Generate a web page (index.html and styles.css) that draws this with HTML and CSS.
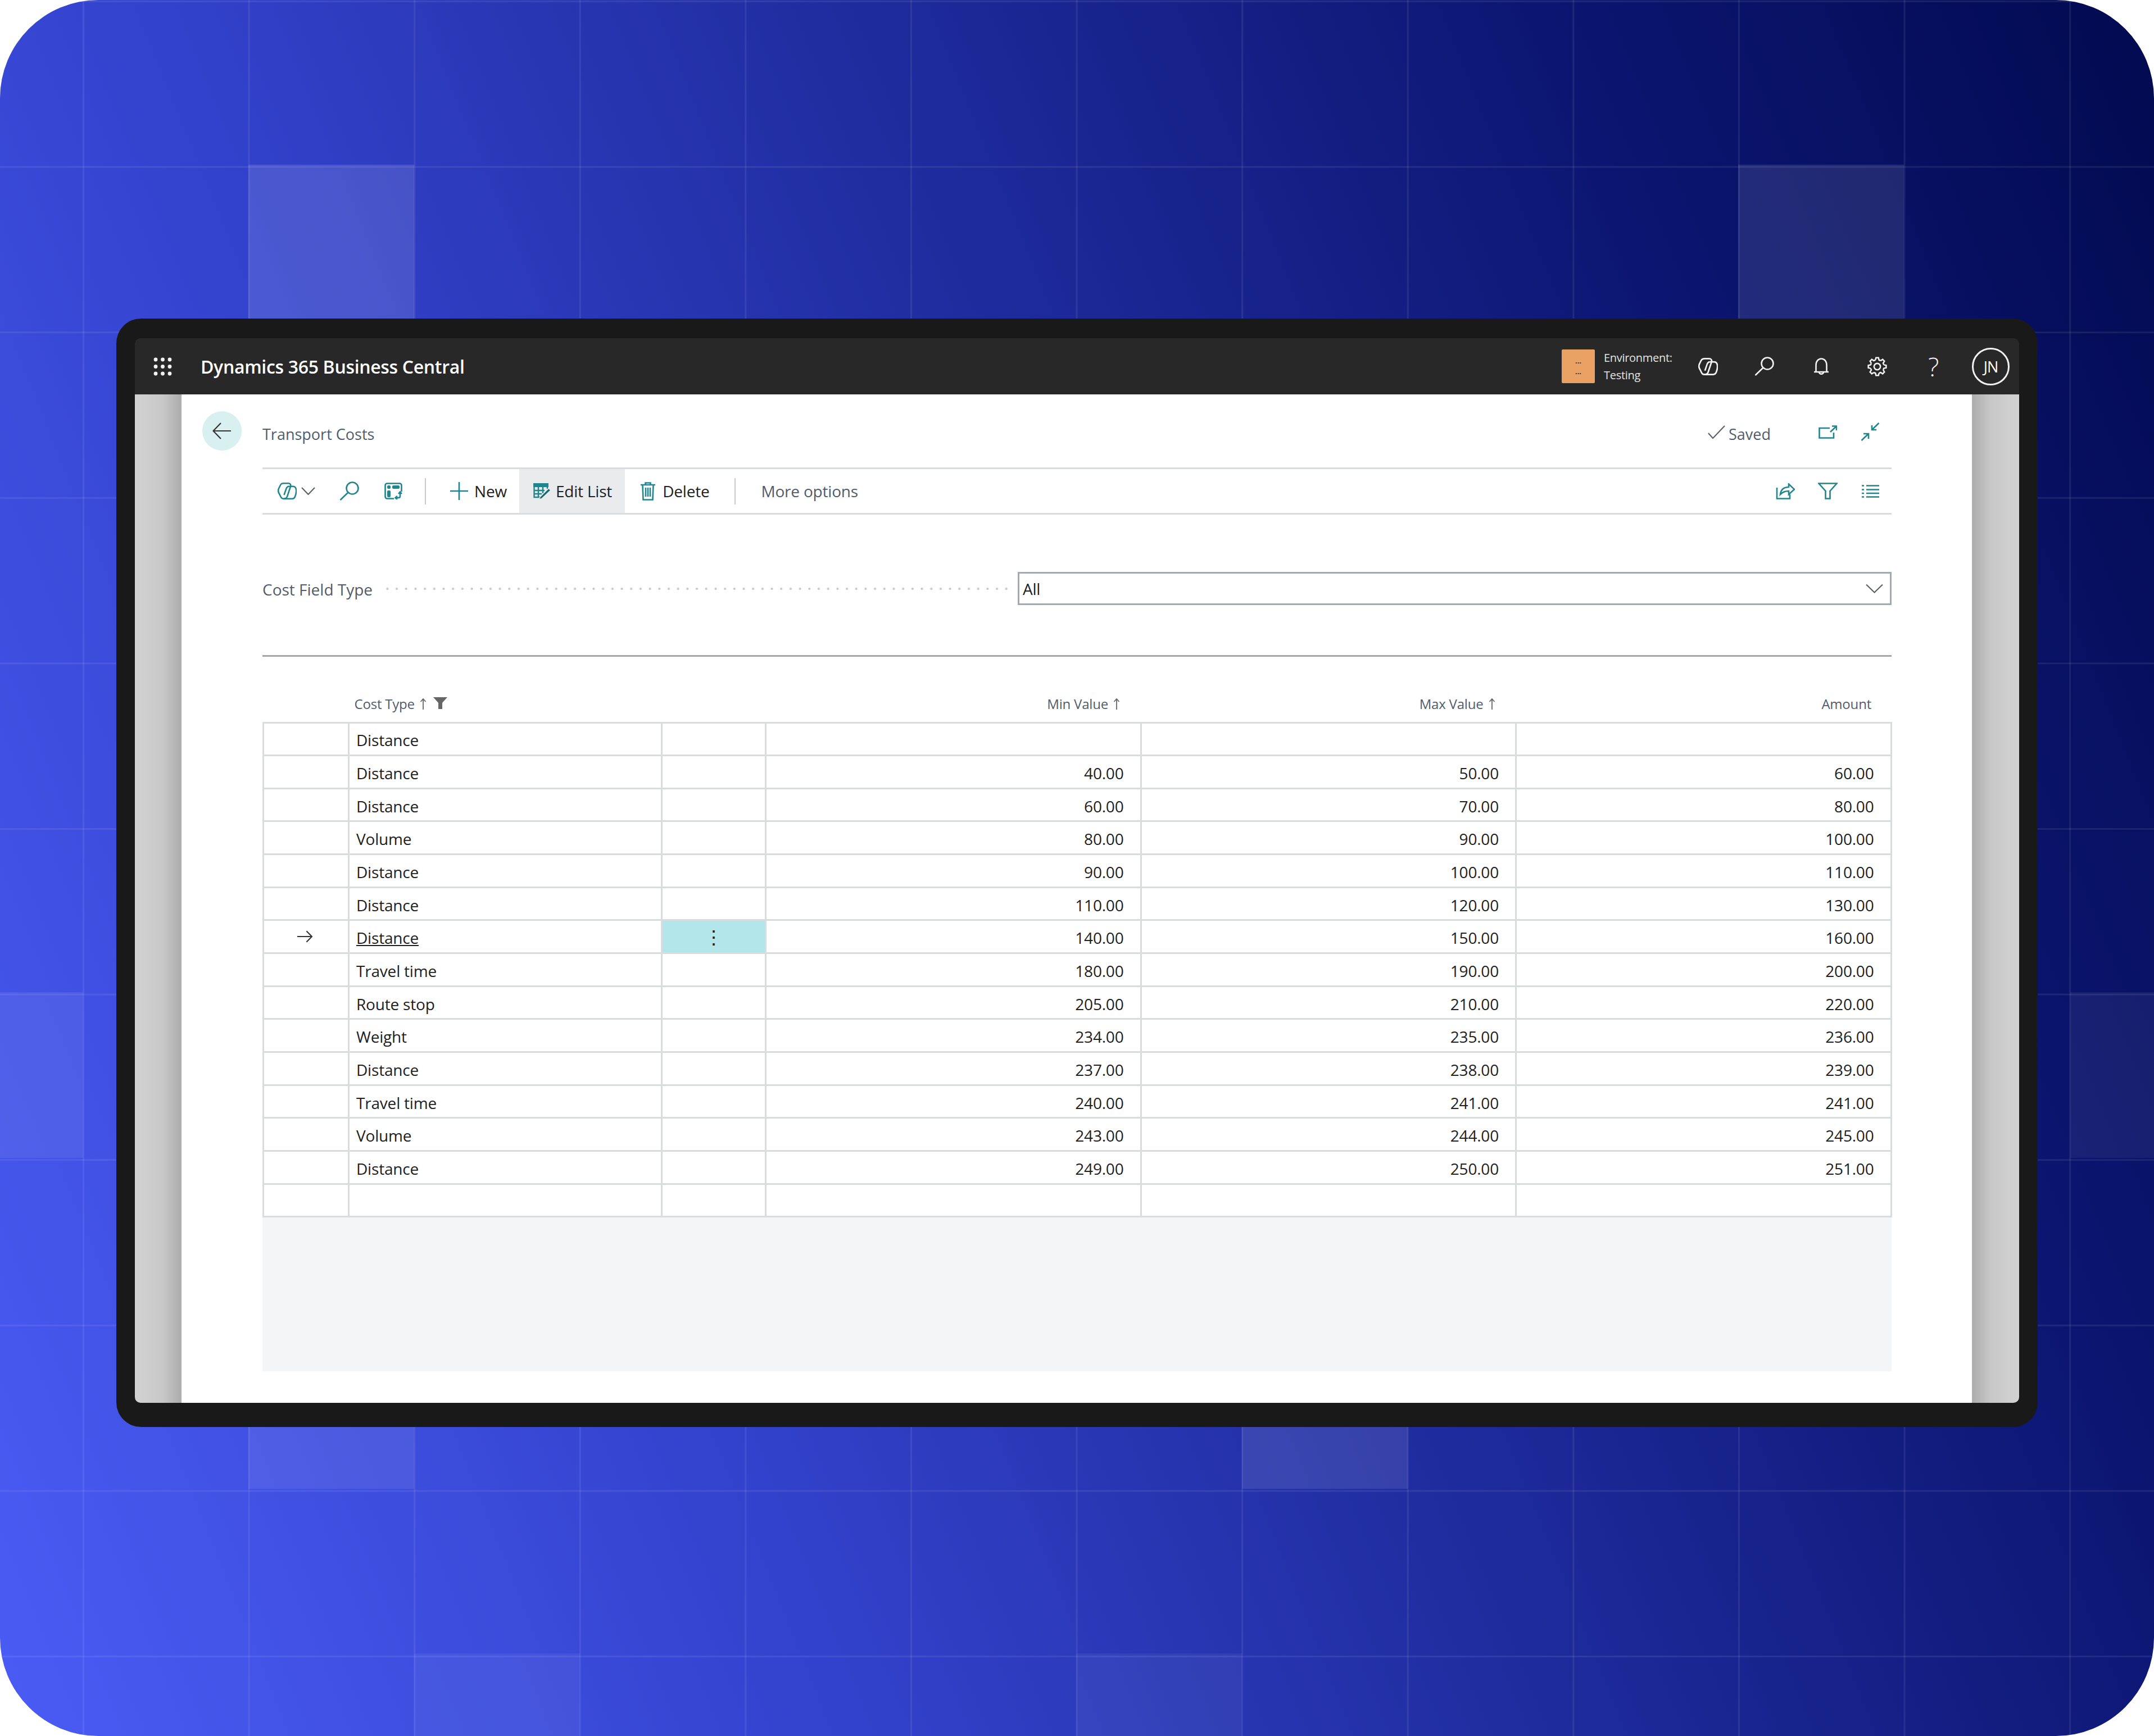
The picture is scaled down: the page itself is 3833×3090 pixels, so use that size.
FILE: index.html
```html
<!DOCTYPE html>
<html lang="en">
<head>
	<meta charset="utf-8">
	<title>Transport Costs</title>
	<link rel="stylesheet" href="styles.css">
</head>
<body>

<svg class="defs" width="0" height="0">
	<symbol id="i-copilot" viewBox="0 0 34 30">
		<path d="M19 1.300H11C8 1.300 6 2.300 5 4.500L2 10.500C0.500 14 1 17 3 20L6 26C7 28 9 28.700 11 28.700C14 28.700 16 27.500 17 25L23 7C24 3.500 22 1.300 19 1.300Z"/>
		<path d="M20 6.800C18 6.800 16.500 8 15.500 10.500L11.500 22"/>
		<path d="M20 6.800H27C30 6.800 32 8.500 32.700 11C33.700 15 33 20 31 25C30 27.500 28 28.700 26 28.700H11"/>
	</symbol>
	<symbol id="i-search" viewBox="0 0 35 34">
		<circle cx="23" cy="12" r="10.500"/>
		<path d="M15.500 19.500 1.500 33"/>
	</symbol>
	<symbol id="i-arrow-up" viewBox="0 0 12 20">
		<path d="M6 20V1M1.500 6 6 1l4.500 5"/>
	</symbol>
</svg>

<div class="page">
	<i class="tile t1"></i><i class="tile t2"></i><i class="tile t3"></i><i class="tile t4"></i>
	<i class="tile t5"></i><i class="tile t6"></i><i class="tile t7"></i><i class="tile t8"></i>

	<div class="frame">
		<header class="topbar">
			<svg class="apps" width="33" height="33" viewBox="0 0 33 33"><g>
				<circle cx="4" cy="4" r="3.400"/><circle cx="16.500" cy="4" r="3.400"/><circle cx="29" cy="4" r="3.400"/>
				<circle cx="4" cy="16.500" r="3.400"/><circle cx="16.500" cy="16.500" r="3.400"/><circle cx="29" cy="16.500" r="3.400"/>
				<circle cx="4" cy="29" r="3.400"/><circle cx="16.500" cy="29" r="3.400"/><circle cx="29" cy="29" r="3.400"/>
			</g></svg>
			<div class="brand">Dynamics 365 Business Central</div>
			<div class="env-box"><span>...</span><span>...</span></div>
			<div class="env-text"><div>Environment:</div><div>Testing</div></div>
			<svg class="ico ico-top t-copilot" width="35" height="31"><use href="#i-copilot"/></svg>
			<svg class="ico ico-top t-search" width="35" height="34"><use href="#i-search"/></svg>
			<svg class="ico ico-top t-bell" width="28" height="31" viewBox="0 0 28 31">
				<path d="M1 25h26M4.500 25V13C4.500 6 8.500 1.500 14 1.500S23.500 6 23.500 13v12M10 25c0 5 8 5 8 0"/>
			</svg>
			<svg class="ico ico-top t-gear" width="35" height="35" viewBox="-18 -18 36 36">
				<circle r="5.800"/>
				<path d="M-3.200-12.100-2.300-16.300H2.300L3.200-12.100 6.250-10.800"/>
				<path transform="rotate(45)" d="M-3.200-12.100-2.300-16.300H2.300L3.200-12.100 6.250-10.800"/>
				<path transform="rotate(90)" d="M-3.200-12.100-2.300-16.300H2.300L3.200-12.100 6.250-10.800"/>
				<path transform="rotate(135)" d="M-3.200-12.100-2.300-16.300H2.300L3.200-12.100 6.250-10.800"/>
				<path transform="rotate(180)" d="M-3.200-12.100-2.300-16.300H2.300L3.200-12.100 6.250-10.800"/>
				<path transform="rotate(225)" d="M-3.200-12.100-2.300-16.300H2.300L3.200-12.100 6.250-10.800"/>
				<path transform="rotate(270)" d="M-3.200-12.100-2.300-16.300H2.300L3.200-12.100 6.250-10.800"/>
				<path transform="rotate(315)" d="M-3.200-12.100-2.300-16.300H2.300L3.200-12.100 6.250-10.800"/>
			</svg>
			<div class="help">?</div>
			<div class="avatar">JN</div>
		</header>

		<div class="workspace">
			<div class="side side-left"></div>
			<main class="panel">
				<div class="page-head">
					<div class="back">
						<svg class="ico ico-dark" width="34" height="32" viewBox="0 0 34 32"><path d="M33 16H2M15 2 1.500 16 15 30"/></svg>
					</div>
					<div class="page-title">Transport Costs</div>
					<svg class="ico ico-gray saved-check" width="31" height="24" viewBox="0 0 31 24"><path d="M1 14l8 9L30 1"/></svg>
					<div class="saved">Saved</div>
					<svg class="ico open-in" width="33" height="24" viewBox="0 0 33 24"><path d="M20 5H1.500V22.500H27V13M21 12 32 1.500M24 1.500H32V9"/></svg>
					<svg class="ico collapse" width="34" height="33" viewBox="0 0 34 33"><path d="M32.500 1 20 13M20 5V13H28M1.500 32 14 20M5 20H14V29"/></svg>
				</div>

				<div class="body">
					<div class="toolbar">
						<svg class="ico b-copilot" width="34" height="30"><use href="#i-copilot"/></svg>
						<svg class="ico ico-gray b-chev" width="25" height="14" viewBox="0 0 25 14"><path d="M1 1l11.500 12L24 1"/></svg>
						<svg class="ico b-search" width="35" height="34"><use href="#i-search"/></svg>
						<svg class="ico b-layout" width="32" height="30" viewBox="0 0 32 30">
							<path d="M17 28.500H5c-2 0-3.500-1.500-3.500-3.500V5C1.500 3 3 1.500 5 1.500h22c2 0 3.500 1.500 3.500 3.500v11"/>
							<rect class="solid" x="5" y="5" width="6" height="6" rx="2"/>
							<rect class="solid" x="14" y="5" width="13" height="6" rx="2"/>
							<rect class="solid" x="5" y="14" width="6" height="12" rx="2"/>
							<path d="M28 17v7c0 2-1 3-3 3h-5M25 20l3-3.500 3 3.500M23 24l-3.500 3 3.500 3"/>
						</svg>
						<span class="tb-sep sep-a"></span>
						<svg class="ico b-plus" width="32" height="32" viewBox="0 0 32 32"><path d="M16 0V32M0 16H32"/></svg>
						<span class="tb-label lbl-new">New</span>
						<div class="tb-btn">
							<svg class="ico" width="32" height="29" viewBox="0 0 32 29">
								<rect class="solid" x="0" y="0" width="27" height="7"/>
								<path class="grid-lines" d="M1.500 7V25H13M1.500 13H20M1.500 19H15M9 7V25M17 7V18M25 7V10"/>
								<path class="pencil" d="M27 9.500 12 24.500l-2 4.500 5-1.500L31 12.500z"/>
							</svg>
							<span class="tb-label">Edit List</span>
						</div>
						<svg class="ico b-trash" width="26" height="34" viewBox="0 0 26 34">
							<path d="M0 6H26M8.500 6V2.500H17.500V6M3.500 6 4.500 32.500H21.500L22.500 6M9 11V27M13 11V27M17 11V27"/>
						</svg>
						<span class="tb-label lbl-delete">Delete</span>
						<span class="tb-sep sep-b"></span>
						<span class="tb-label tb-muted">More options</span>

						<div class="tb-right">
							<svg class="ico" width="34" height="29" viewBox="0 0 34 29"><path d="M2 8V27.500H25V20M8 20C9 12 14 7 23 7V1.500L33 11 23 20V14C17 14 12 16 8 20Z"/></svg>
							<svg class="ico b-funnel" width="35" height="30" viewBox="0 0 35 30"><path d="M1.500 1.500H33.500L21.500 15V28.500H13.500V15Z"/></svg>
							<svg class="ico b-lines" width="31" height="23" viewBox="0 0 31 23"><path d="M0 1.500H4M8 1.500H31M0 8.500H4M8 8.500H31M0 15H4M8 15H31M0 21.500H4M8 21.500H31"/></svg>
						</div>
					</div>

					<div class="field-row">
						<span class="field-label">Cost Field Type</span>
						<span class="field-dots"></span>
						<div class="field-input">
							<span>All</span>
							<svg class="ico ico-gray" width="31" height="17" viewBox="0 0 31 17"><path d="M1 1.500l14.500 14L30 1.500"/></svg>
						</div>
					</div>
					<div class="divider"></div>

					<table class="grid">
						<colgroup>
							<col class="c-mark"><col class="c-type"><col class="c-menu"><col class="c-num"><col class="c-num"><col class="c-num">
						</colgroup>
						<thead>
							<tr>
								<th></th>
								<th class="left">Cost Type<svg class="sort" width="12" height="20"><use href="#i-arrow-up"/></svg><svg class="head-funnel" width="25" height="21" viewBox="0 0 25 21"><path d="M0 0H25L16 10V21H9V10Z"/></svg></th>
								<th></th>
								<th>Min Value<svg class="sort" width="12" height="20"><use href="#i-arrow-up"/></svg></th>
								<th>Max Value<svg class="sort" width="12" height="20"><use href="#i-arrow-up"/></svg></th>
								<th class="plain">Amount</th>
							</tr>
						</thead>
						<tbody>
							<tr><td></td><td class="left">Distance</td><td></td><td></td><td></td><td></td></tr>
							<tr><td></td><td class="left">Distance</td><td></td><td>40.00</td><td>50.00</td><td>60.00</td></tr>
							<tr><td></td><td class="left">Distance</td><td></td><td>60.00</td><td>70.00</td><td>80.00</td></tr>
							<tr><td></td><td class="left">Volume</td><td></td><td>80.00</td><td>90.00</td><td>100.00</td></tr>
							<tr><td></td><td class="left">Distance</td><td></td><td>90.00</td><td>100.00</td><td>110.00</td></tr>
							<tr><td></td><td class="left">Distance</td><td></td><td>110.00</td><td>120.00</td><td>130.00</td></tr>
							<tr>
								<td class="mark"><svg class="ico ico-dark" width="27" height="22" viewBox="0 0 28 22"><path d="M0 11H27M17 1l10 10-10 10"/></svg></td>
								<td class="left"><u>Distance</u></td>
								<td class="menu-cell">⋮</td>
								<td>140.00</td><td>150.00</td><td>160.00</td>
							</tr>
							<tr><td></td><td class="left">Travel time</td><td></td><td>180.00</td><td>190.00</td><td>200.00</td></tr>
							<tr><td></td><td class="left">Route stop</td><td></td><td>205.00</td><td>210.00</td><td>220.00</td></tr>
							<tr><td></td><td class="left">Weight</td><td></td><td>234.00</td><td>235.00</td><td>236.00</td></tr>
							<tr><td></td><td class="left">Distance</td><td></td><td>237.00</td><td>238.00</td><td>239.00</td></tr>
							<tr><td></td><td class="left">Travel time</td><td></td><td>240.00</td><td>241.00</td><td>241.00</td></tr>
							<tr><td></td><td class="left">Volume</td><td></td><td>243.00</td><td>244.00</td><td>245.00</td></tr>
							<tr><td></td><td class="left">Distance</td><td></td><td>249.00</td><td>250.00</td><td>251.00</td></tr>
							<tr><td></td><td class="left"></td><td></td><td></td><td></td><td></td></tr>
						</tbody>
					</table>
					<div class="grid-empty"></div>
				</div>
			</main>
			<div class="side side-right"></div>
		</div>
	</div>
</div>

</body>
</html>
```

FILE: styles.css
```css
body { margin: 0; background: #fff; font-family: "Open Sans", "Noto Sans", sans-serif; color: #212121; }

/* backdrop */
.page {
	position: relative; box-sizing: border-box; width: 3833px; height: 3090px; padding: 567px 207px 0;
	border-radius: 175px; overflow: hidden;
	background:
		linear-gradient(rgba(255,255,255,.08) 3px, transparent 3px) 0 1px / 100% 294.6px,
		linear-gradient(90deg, rgba(255,255,255,.08) 3px, transparent 3px) 147px 0 / 294.6px 100%,
		linear-gradient(68deg, #4a5cf5 0%, #3342cc 30%, #1e2b9c 55%, #0c1672 78%, #020a50 100%);
}
.tile { position: absolute; width: 295px; height: 295px; background: rgba(255,255,255,.12); }
.t1 { left: 442px; top: 293px; }
.t2 { left: 3093px; top: 293px; background: rgba(255,255,255,.1); }
.t3 { left: 0; top: 1766px; width: 148px; background: rgba(255,255,255,.07); }
.t4 { left: 3684px; top: 1766px; width: 149px; background: rgba(255,255,255,.06); }
.t5 { left: 442px; top: 2540px; height: 110px; background: rgba(255,255,255,.08); }
.t6 { left: 2210px; top: 2540px; height: 110px; background: rgba(255,255,255,.1); }
.t7 { left: 737px; top: 2943px; height: 147px; background: rgba(255,255,255,.05); }
.t8 { left: 1915px; top: 2943px; height: 147px; background: rgba(255,255,255,.05); }

.frame {
	position: relative; box-sizing: border-box; width: 3419px; height: 1973px; padding: 35px 33px 43px;
	background: #191919; border-radius: 44px; display: flex; flex-direction: column;
}

/* icons */
.defs { position: absolute; }
.ico { fill: none; stroke: #20858c; stroke-width: 2.6; flex: none; display: block; }
.ico .solid { fill: #20858c; stroke: none; }
.ico .grid-lines { stroke-width: 2.4; }
.ico .pencil { fill: #17696f; stroke: #e9ebed; stroke-width: 1.4; }
.ico-top { stroke: #f2f2f2; }
.ico-gray { stroke: #5f6368; stroke-width: 2.2; }
.ico-dark { stroke: #333; stroke-width: 2.2; }

/* top bar */
.topbar {
	height: 100px; flex: none; display: flex; align-items: center; padding: 0 17px 0 33px;
	background: #282828; border-radius: 10px 10px 0 0; color: #fff;
}
.apps { fill: #f2f2f2; flex: none; }
.brand { margin-left: 51px; font-size: 32px; font-weight: 600; letter-spacing: -.33px; }
.env-box {
	margin-left: auto; width: 59px; height: 60px; border-radius: 2px; background: #e9a263; color: #333;
	display: flex; flex-direction: column; align-items: center; justify-content: center; gap: 4px;
	font-size: 13px; line-height: 15px; font-weight: 700;
}
.env-text { margin-left: 16px; width: 133px; font-size: 20px; line-height: 31px; color: #e4e4e4; letter-spacing: -.3px; }
.t-copilot { margin-left: 35px; }
.t-search { margin-left: 65px; }
.t-bell { margin-left: 70px; }
.t-gear { margin-left: 68px; }
.help { margin-left: 73px; width: 19px; font-size: 46px; font-weight: 300; color: #f2f2f2; line-height: 1; text-align: center; }
.avatar {
	margin-left: 59px; box-sizing: border-box; width: 67px; height: 67px; border: 3px solid #f2f2f2; border-radius: 50%;
	display: flex; align-items: center; justify-content: center; font-size: 27px; letter-spacing: -1px;
}

/* page area */
.workspace { flex: 1; display: flex; min-height: 0; border-radius: 0 0 10px 10px; overflow: hidden; }
.side { width: 83px; flex: none; }
.side-left { background: linear-gradient(90deg, #d2d2d2 0%, #c8c8c8 60%, #acacac 100%); }
.side-right { width: 84px; background: linear-gradient(90deg, #acacac 0%, #c8c8c8 40%, #d2d2d2 100%); }
.panel { flex: 1; background: #fff; padding: 30px 143px 0 37px; min-width: 0; }

.page-head { height: 70px; display: flex; align-items: center; padding-right: 21px; }
.back { width: 70px; height: 70px; border-radius: 50%; background: #d9f0f0; display: flex; align-items: center; justify-content: center; }
.page-title { margin-left: 37px; padding-top: 10px; font-size: 27px; color: #505c6d; }
.saved-check { margin-left: auto; margin-top: 3px; }
.saved { margin-left: 6px; padding-top: 10px; font-size: 27px; color: #505c6d; }
.open-in { margin-left: 85px; margin-top: 3px; }
.collapse { margin-left: 42px; margin-top: 3px; }

.body { margin-left: 107px; }

/* action bar */
.toolbar {
	margin-top: 30px; height: 84px; box-sizing: border-box; padding: 0 22px 0 27px;
	border-top: 3px solid #d9dcdf; border-bottom: 3px solid #d9dcdf;
	display: flex; align-items: center;
}
.tb-label { font-size: 28px; letter-spacing: -.2px; white-space: nowrap; }
.tb-muted { color: #505c6d; margin-left: 45px; }
.tb-sep { width: 2px; height: 47px; background: #c8cacc; flex: none; }
.b-chev { margin-left: 8px; }
.b-search { margin-left: 43px; }
.b-layout { margin-left: 45px; }
.sep-a { margin-left: 40px; }
.b-plus { margin-left: 43px; }
.lbl-new { margin-left: 11px; }
.tb-btn { align-self: stretch; margin-left: 22px; padding: 0 23px 0 25px; background: #e9ebed; display: flex; align-items: center; gap: 8px; }
.b-trash { margin-left: 28px; }
.lbl-delete { margin-left: 13px; }
.sep-b { margin-left: 45px; }
.tb-right { margin-left: auto; display: flex; align-items: center; }
.b-funnel { margin-left: 41px; }
.b-lines { margin-left: 43px; }

/* filter field */
.field-row { margin-top: 102px; height: 59px; display: flex; align-items: center; }
.field-label { font-size: 28px; padding-top: 3px; color: #505c6d; white-space: nowrap; }
.field-dots { flex: 1; height: 6px; margin: 0 14px 0 18px; background: radial-gradient(circle, #c9cccf 1.8px, transparent 2.4px) 0 0 / 16.7px 6px repeat-x; }
.field-input {
	box-sizing: border-box; width: 1555px; height: 59px; padding: 0 12px 0 6px;
	border: 3px solid #a3a9b3; display: flex; align-items: center; justify-content: space-between;
	font-size: 28px; letter-spacing: -.2px;
}
.divider { margin-top: 89px; height: 3px; background: #a6a6a6; }

/* table */
.grid { width: calc(100% - 2px); table-layout: fixed; border-collapse: collapse; font-size: 28px; }
.c-mark { width: 152px; }
.c-type { width: 557px; }
.c-menu { width: 185px; }
.c-num { width: 667.500px; }
.grid th {
	height: 117px; box-sizing: border-box; vertical-align: bottom; padding: 0 37px 16px 0; border: 0;
	font-size: 24px; font-weight: 400; color: #505c6d; text-align: right; white-space: nowrap; letter-spacing: -.2px;
}
.grid th.left { padding: 0 0 16px 10px; text-align: left; }
.grid th.plain { padding-right: 35px; }
.sort { fill: none; stroke: #666; stroke-width: 1.8; margin-left: 9px; vertical-align: -1px; }
.head-funnel { fill: #666; margin-left: 12px; vertical-align: 0; }
.grid td {
	height: 58.670px; box-sizing: border-box; padding: 4px 29px 0 0; border: 3px solid #d9dcdf;
	text-align: right; color: #212121; line-height: 1; letter-spacing: -.2px;
}
.grid td.left { padding: 4px 0 0 12px; text-align: left; }
.grid td.mark { padding: 0 4px 0 0; }
.mark .ico { margin: 0 auto; }
.grid td.menu-cell { padding: 0; background: #b3e6eb; text-align: center; font-size: 34px; color: #222; }
.grid-empty { height: 274px; background: #f4f5f6; }
```
